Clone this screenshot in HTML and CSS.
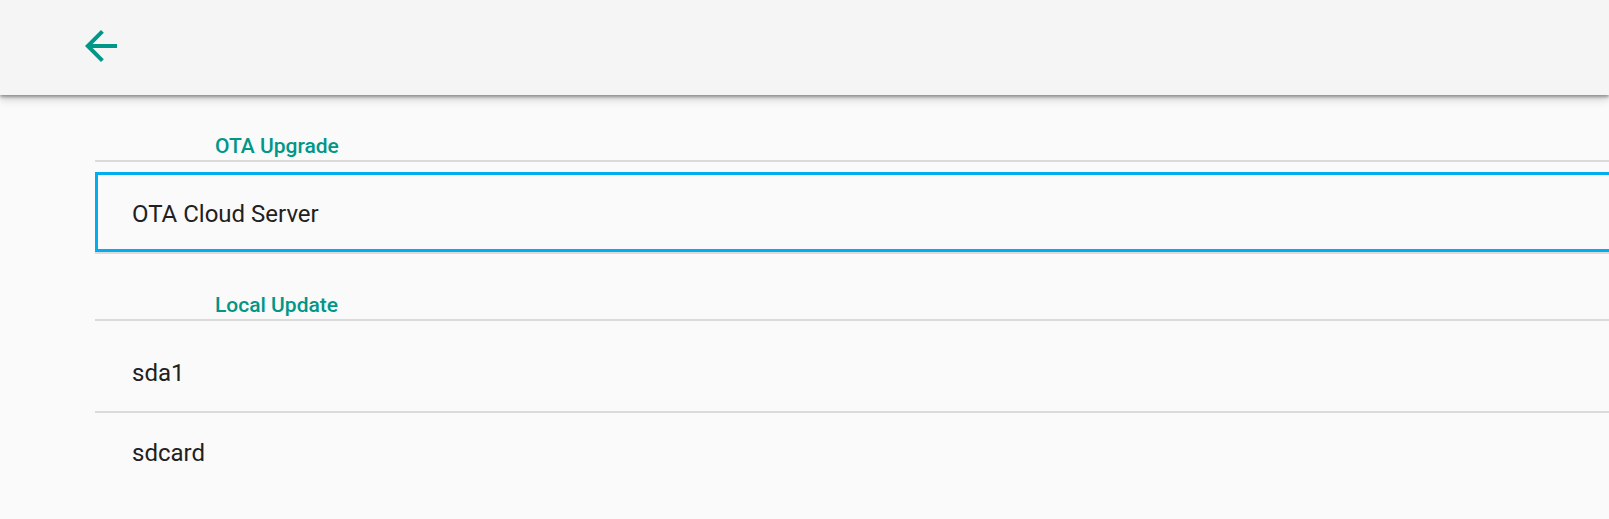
FILE: index.html
```html
<!DOCTYPE html>
<html lang="en">

<head>
  <meta charset="UTF-8">
  <meta name="viewport" content="width=device-width, initial-scale=1.0">
  <title>System Update</title>
  <link rel="stylesheet" href="styles.css">
</head>

<body>
  <div class="toolbar">
    <button class="back" aria-label="Back">
      <svg viewBox="0 0 24 24" width="48" height="48">
        <path d="M20 11H7.83l5.59-5.59L12 4l-8 8 8 8 1.41-1.41L7.83 13H20v-2z" fill="#009688"/>
      </svg>
    </button>
  </div>

  <div class="list">
    <div class="category">OTA Upgrade</div>
    <div class="item">
      <div class="item-row focused">OTA Cloud Server</div>
    </div>

    <div class="category">Local Update</div>
    <div class="item">
      <div class="item-row">sda1</div>
    </div>
    <div class="item last">
      <div class="item-row">sdcard</div>
    </div>
  </div>
</body>

</html>
```

FILE: styles.css
```css
html,
body {
  margin: 0;
  height: 100%;
  overflow: hidden;
}

body {
  font-family: Roboto, "Noto Sans", Arial, sans-serif;
  background-color: #fafafa;
  color: #212121;
}

.toolbar {
  height: 95px;
  background-color: #f5f5f5;
  box-shadow: 0 2px 3px rgba(0, 0, 0, 0.35), 0 5px 8px rgba(0, 0, 0, 0.15);
  display: flex;
  align-items: flex-start;
  padding: 22px 0 0 77px;
  box-sizing: border-box;
  position: relative;
}

.back {
  width: 48px;
  height: 48px;
  padding: 0;
  border: none;
  background: none;
  cursor: pointer;
}

.back svg {
  display: block;
}

.list {
  margin-left: 95px;
}

.category {
  height: 26px;
  padding: 39px 0 0 120px;
  font-size: 21px;
  line-height: 24px;
  font-weight: 500;
  color: #009688;
  border-bottom: 2px solid #dadada;
}

.item {
  height: 80px;
  padding-top: 10px;
  border-bottom: 2px solid #dadada;
}

.item.last {
  border-bottom: none;
}

.item-row {
  height: 80px;
  box-sizing: border-box;
  margin-right: -10px;
  padding: 25px 0 0 34px;
  border: 3px solid transparent;
  font-size: 24px;
  line-height: 28px;
}

.item.last .item-row {
  padding-top: 13px;
}

.item-row.focused {
  border-color: #00aeef;
}
```
